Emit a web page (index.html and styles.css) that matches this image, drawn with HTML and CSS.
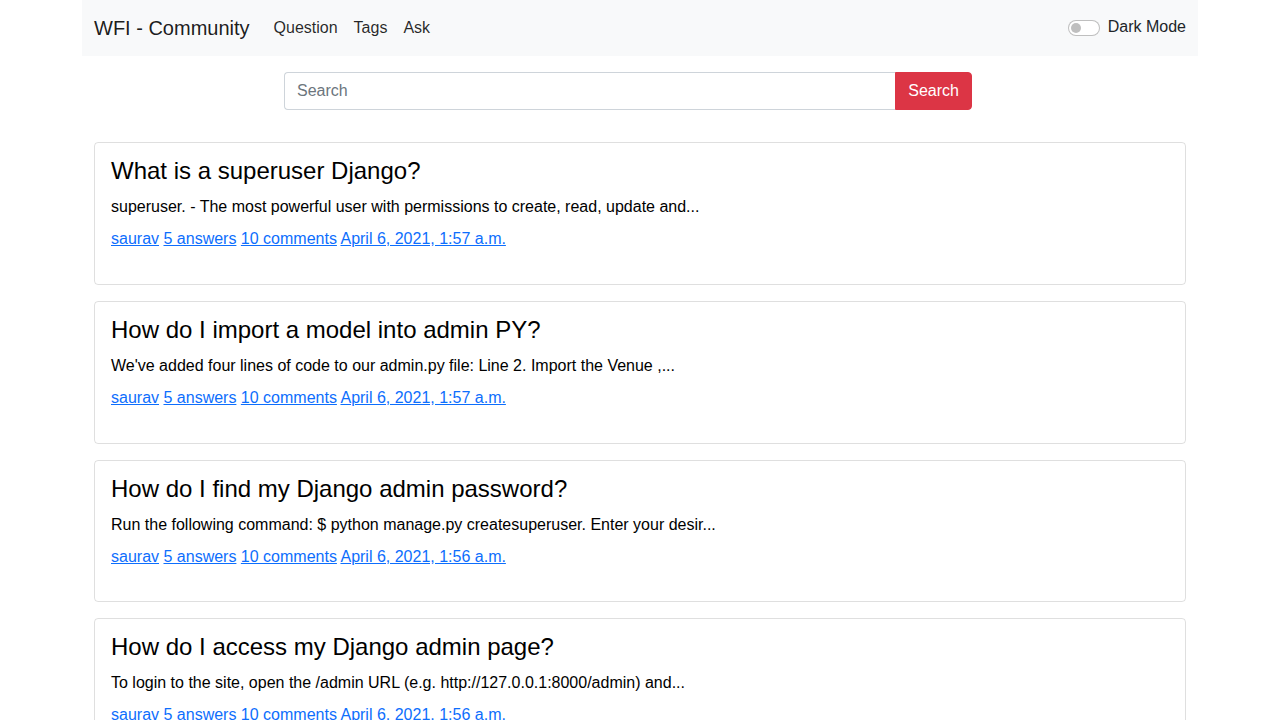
FILE: index.html
```html
<!DOCTYPE html>
<html lang="en">
<head>
<meta charset="utf-8">
<title>WFI - Community</title>
<link rel="stylesheet" href="styles.css">
</head>
<body>
<div class="container">
  <nav class="navbar">
    <div class="nav-left">
      <a class="brand" href="#">WFI - Community</a>
      <ul class="nav-links">
        <li><a href="#">Question</a></li>
        <li><a href="#">Tags</a></li>
        <li><a href="#">Ask</a></li>
      </ul>
    </div>
    <label class="switch">
      <span class="switch-track"><span class="switch-knob"></span></span>
      <span class="switch-label">Dark Mode</span>
    </label>
  </nav>

  <div class="content">
    <form class="search-form">
      <input class="search-input" type="text" placeholder="Search">
      <button class="search-btn" type="button">Search</button>
    </form>

    <div class="card">
      <h4 class="card-title">What is a superuser Django?</h4>
      <p class="card-text">superuser. - The most powerful user with permissions to create, read, update and...</p>
      <p class="card-meta"><a href="#">saurav</a> <a href="#">5 answers</a> <a href="#">10 comments</a> <a href="#">April 6, 2021, 1:57 a.m.</a></p>
    </div>

    <div class="card">
      <h4 class="card-title">How do I import a model into admin PY?</h4>
      <p class="card-text">We've added four lines of code to our admin.py file: Line 2. Import the Venue ,...</p>
      <p class="card-meta"><a href="#">saurav</a> <a href="#">5 answers</a> <a href="#">10 comments</a> <a href="#">April 6, 2021, 1:57 a.m.</a></p>
    </div>

    <div class="card">
      <h4 class="card-title">How do I find my Django admin password?</h4>
      <p class="card-text">Run the following command: $ python manage.py createsuperuser. Enter your desir...</p>
      <p class="card-meta"><a href="#">saurav</a> <a href="#">5 answers</a> <a href="#">10 comments</a> <a href="#">April 6, 2021, 1:56 a.m.</a></p>
    </div>

    <div class="card">
      <h4 class="card-title">How do I access my Django admin page?</h4>
      <p class="card-text">To login to the site, open the /admin URL (e.g. http://127.0.0.1:8000/admin) and...</p>
      <p class="card-meta"><a href="#">saurav</a> <a href="#">5 answers</a> <a href="#">10 comments</a> <a href="#">April 6, 2021, 1:56 a.m.</a></p>
    </div>
  </div>
</div>
</body>
</html>
```
FILE: styles.css
```css
* { box-sizing: border-box; }
html, body {
  margin: 0;
  padding: 0;
  background: #fff;
  color: #212529;
  font-family: "Liberation Sans", Arial, sans-serif;
  font-size: 16px;
  line-height: 1.5;
}
.container {
  width: 1140px;
  margin: 0 auto;
  padding: 0 12px;
}
.navbar {
  height: 56px;
  background: #f8f9fa;
  padding: 0 12px;
  display: flex;
  align-items: center;
  justify-content: space-between;
}
.nav-left {
  display: flex;
  align-items: center;
}
.brand {
  font-size: 20px;
  color: rgba(0,0,0,0.9);
  text-decoration: none;
  margin-right: 16px;
  padding: 5px 0;
}
.nav-links {
  list-style: none;
  margin: 0;
  padding: 0;
  display: flex;
}
.nav-links a {
  display: block;
  padding: 8px;
  color: rgba(0,0,0,0.85);
  text-decoration: none;
}
.switch {
  display: flex;
  align-items: center;
}
.switch-track {
  width: 32px;
  height: 16px;
  border: 1px solid rgba(0,0,0,0.25);
  border-radius: 8px;
  background: #fff;
  display: flex;
  align-items: center;
  padding-left: 2px;
  margin-right: 8px;
}
.switch-knob {
  width: 10px;
  height: 10px;
  border-radius: 50%;
  background: #bfbfbf;
}
.switch-label {
  color: #212529;
  padding-bottom: 2px;
}
.content {
  padding: 16px 12px 0;
}
.search-form {
  display: flex;
  width: 688px;
  margin-left: 190px;
  margin-bottom: 32px;
}
.search-input {
  flex: 1;
  height: 38px;
  border: 1px solid #ced4da;
  border-right: none;
  border-radius: 4px 0 0 4px;
  padding: 6px 12px;
  font-family: inherit;
  font-size: 16px;
  color: #212529;
  outline: none;
}
.search-input::placeholder { color: #6c757d; }
.search-btn {
  height: 38px;
  background: #dc3545;
  border: 1px solid #dc3545;
  color: #fff;
  border-radius: 0 4px 4px 0;
  padding: 6px 12px;
  font-family: inherit;
  font-size: 16px;
}
.card {
  border: 1px solid rgba(0,0,0,0.125);
  border-radius: 4px;
  padding: 14.2px 16px 16.6px;
  margin-bottom: 16px;
}
.card-title {
  font-size: 24px;
  font-weight: 400;
  line-height: 1.2;
  margin: 0 0 9.2px;
  color: #000;
}
.card-text {
  margin: 0 0 8px;
  color: #000;
}
.card-meta {
  margin: 0 0 16px;
}
.card-meta a {
  color: #0d6efd;
  text-decoration: underline;
}
```
